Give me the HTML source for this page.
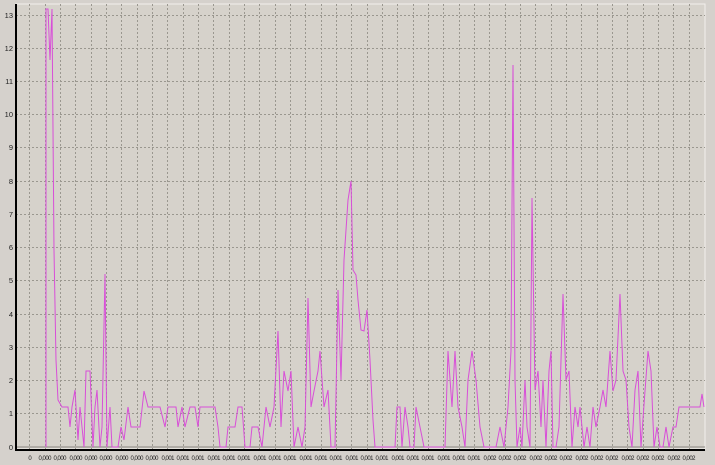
<!DOCTYPE html><html><head><style>body{margin:0;background:#d5d1cc;width:715px;height:465px;overflow:hidden;font-family:"Liberation Sans",sans-serif}</style></head><body>
<svg width="715" height="465" xmlns="http://www.w3.org/2000/svg" style="position:absolute;left:0;top:0">
<rect width="715" height="465" fill="#d5d1cc"/>
<rect x="16" y="4" width="689" height="445" fill="#d6d2cb" stroke="#f2f0ec"/>
<g stroke="#9a978f" stroke-dasharray="2,2" stroke-width="1">
<path d="M16 15.5H705M16 48.5H705M16 81.5H705M16 114.5H705M16 147.5H705M16 181.5H705M16 214.5H705M16 247.5H705M16 280.5H705M16 314.5H705M16 347.5H705M16 380.5H705M16 413.5H705"/>
<path d="M29.5 4V449M45.5 4V449M60.5 4V449M75.5 4V449M91.5 4V449M106.5 4V449M121.5 4V449M137.5 4V449M152.5 4V449M167.5 4V449M183.5 4V449M198.5 4V449M213.5 4V449M229.5 4V449M244.5 4V449M259.5 4V449M275.5 4V449M290.5 4V449M305.5 4V449M321.5 4V449M336.5 4V449M351.5 4V449M367.5 4V449M382.5 4V449M397.5 4V449M413.5 4V449M428.5 4V449M443.5 4V449M459.5 4V449M474.5 4V449M489.5 4V449M505.5 4V449M520.5 4V449M535.5 4V449M551.5 4V449M566.5 4V449M581.5 4V449M597.5 4V449M612.5 4V449M627.5 4V449M643.5 4V449M658.5 4V449M673.5 4V449M689.5 4V449"/>
</g>
<line x1="16" y1="447" x2="705" y2="447" stroke="#8a8780"/>
<path d="M16 4V450H705" fill="none" stroke="#000" stroke-width="2"/>
<polyline fill="none" stroke="#d84fd8" stroke-width="1" points="46,447 46,9 48,9 50,60 52,9 54,250 56,360 58,400 62,407 68,407 70,427 72,407 75,390 78,440 80,407 84,447 86,371 90,371 93,447 95,407 97,390 100,447 102,427 105,274 107,447 110,407 112,447 118,447 121,427 124,440 128,407 131,427 140,427 144,391 148,407 160,407 165,427 168,407 176,407 178,427 182,407 185,427 190,407 195,407 198,427 200,407 215,407 218,427 220,447 226,447 228,427 235,427 238,407 242,407 245,447 250,447 252,427 258,427 262,447 266,407 270,427 274,407 278,331 281,427 284,371 288,391 291,371 294,447 298,427 302,447 305,427 308,298 311,407 314,391 318,371 320,351 324,407 328,390 331,447 335,447 338,290 341,380 344,260 348,200 351,181 353,270 356,275 358,300 361,330 364,331 367,310 370,360 373,420 375,447 395,447 397,407 400,407 402,447 405,407 408,427 410,447 414,447 416,407 420,427 424,447 430,447 432,447 440,447 445,447 448,351 452,407 455,351 458,407 462,427 465,447 468,380 472,351 476,380 480,427 484,447 488,447 492,447 496,447 500,427 504,447 508,407 511,351 513,65 515,380 517,447 520,427 522,447 525,380 527,427 530,447 532,198 535,390 538,371 541,427 543,380 546,447 549,371 551,351 553,447 556,447 559,427 563,294 566,380 569,371 572,447 575,407 578,427 580,407 584,447 587,427 590,447 593,407 596,427 600,407 603,390 606,407 610,351 613,391 616,380 620,294 623,371 626,380 629,427 632,447 635,390 638,371 641,447 645,391 648,351 651,371 654,447 657,427 660,447 663,447 666,427 669,447 673,427 676,427 679,407 700,407 702,394 704,407"/>
<g font-size="7.5" fill="#222" text-anchor="end">
<text x="13" y="18">13</text><text x="13" y="51">12</text><text x="13" y="84">11</text><text x="13" y="117">10</text><text x="13" y="150">9</text><text x="13" y="184">8</text><text x="13" y="217">7</text><text x="13" y="250">6</text><text x="13" y="283">5</text><text x="13" y="317">4</text><text x="13" y="350">3</text><text x="13" y="383">2</text><text x="13" y="416">1</text><text x="13" y="450">0</text>
</g>
<g font-size="6" fill="#222" text-anchor="middle" textLength="13" lengthAdjust="spacingAndGlyphs">
<text x="30" y="460">0</text>
<text x="45" y="460" textLength="13">0,000</text><text x="60" y="460" textLength="13">0,000</text><text x="76" y="460" textLength="13">0,000</text><text x="91" y="460" textLength="13">0,000</text><text x="106" y="460" textLength="13">0,000</text><text x="122" y="460" textLength="13">0,000</text><text x="137" y="460" textLength="13">0,000</text><text x="152" y="460" textLength="13">0,000</text>
<text x="168" y="460" textLength="13">0,001</text><text x="183" y="460" textLength="13">0,001</text><text x="198" y="460" textLength="13">0,001</text><text x="214" y="460" textLength="13">0,001</text><text x="229" y="460" textLength="13">0,001</text><text x="244" y="460" textLength="13">0,001</text><text x="260" y="460" textLength="13">0,001</text><text x="275" y="460" textLength="13">0,001</text><text x="290" y="460" textLength="13">0,001</text><text x="306" y="460" textLength="13">0,001</text><text x="321" y="460" textLength="13">0,001</text><text x="336" y="460" textLength="13">0,001</text><text x="352" y="460" textLength="13">0,001</text><text x="367" y="460" textLength="13">0,001</text><text x="382" y="460" textLength="13">0,001</text><text x="398" y="460" textLength="13">0,001</text><text x="413" y="460" textLength="13">0,001</text><text x="428" y="460" textLength="13">0,001</text><text x="444" y="460" textLength="13">0,001</text><text x="459" y="460" textLength="13">0,001</text><text x="474" y="460" textLength="13">0,001</text>
<text x="490" y="460" textLength="13">0,002</text><text x="505" y="460" textLength="13">0,002</text><text x="520" y="460" textLength="13">0,002</text><text x="536" y="460" textLength="13">0,002</text><text x="551" y="460" textLength="13">0,002</text><text x="566" y="460" textLength="13">0,002</text><text x="582" y="460" textLength="13">0,002</text><text x="597" y="460" textLength="13">0,002</text><text x="612" y="460" textLength="13">0,002</text><text x="628" y="460" textLength="13">0,002</text><text x="643" y="460" textLength="13">0,002</text><text x="658" y="460" textLength="13">0,002</text><text x="674" y="460" textLength="13">0,002</text><text x="689" y="460" textLength="13">0,002</text>
</g>
</svg></body></html>
